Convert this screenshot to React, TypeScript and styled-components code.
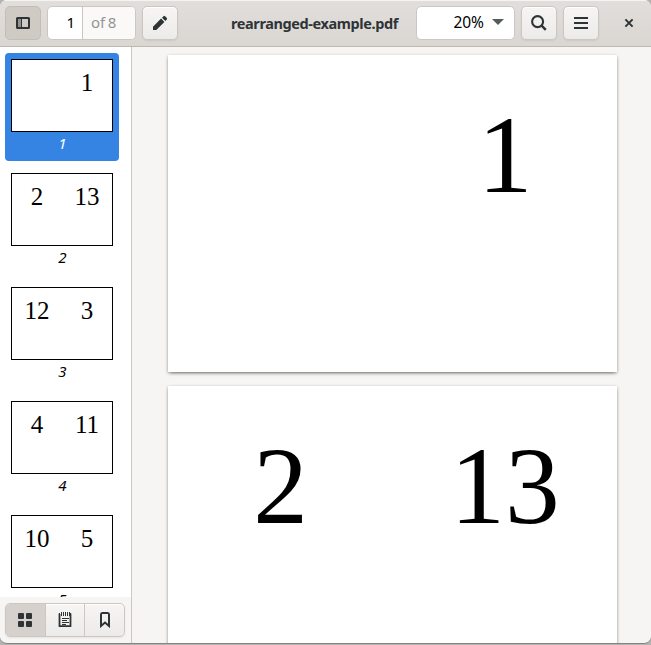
import React from 'react';
import styled, { createGlobalStyle, css } from 'styled-components';

const Global = createGlobalStyle`
  * { box-sizing: border-box; }
  body { margin: 0; overflow: hidden; background: #b4b3b1; }
`;

const Window = styled.div`
  width: 651px;
  height: 644px;
  display: flex;
  flex-direction: column;
  overflow: hidden;
  background: #f6f5f4;
  border-bottom: 1px solid #858483;
  border-radius: 7px;
  font: 15px 'Noto Sans', sans-serif;
  color: #2e3436;
`;

const HeaderBar = styled.header`
  flex: none;
  height: 47px;
  display: flex;
  align-items: center;
  padding: 0 5px;
  background: linear-gradient(#e1dedb, #dad6d2);
  border-bottom: 1px solid #bfb8b1;
  box-shadow: inset 0 1px #f5f4f3;
`;

const raised = css`
  border: 1px solid #cdc7c2;
  background: linear-gradient(#f6f5f4, #edebe9);
  box-shadow: inset 0 1px #fff, 0 1px 2px rgba(0, 0, 0, 0.07);
`;

const IconButton = styled.button<{ $active?: boolean; $gap?: number }>`
  width: 36px;
  height: 34px;
  flex: none;
  padding: 0;
  margin-left: ${(p) => p.$gap ?? 0}px;
  display: flex;
  align-items: center;
  justify-content: center;
  border-radius: 5px;
  color: #2e3436;
  ${raised}
  ${(p) => p.$active && css`
    background: #d0cac4;
    border-color: #c4bdb6;
    box-shadow: none;
  `}
`;

const PageEntry = styled.div`
  width: 89px;
  height: 34px;
  margin-left: 6px;
  display: flex;
  border: 1px solid #cdc7c2;
  border-radius: 5px;
  overflow: hidden;
  background: #fff;
  line-height: 31px;
`;

const CurrentPage = styled.span`
  width: 35px;
  padding-right: 7px;
  text-align: right;
  color: #000;
  border-right: 1px solid #cdc7c2;
`;

const PageCount = styled.span`
  flex: 1;
  padding-left: 8px;
  background: #faf9f8;
  color: #929595;
  word-spacing: -1.5px;
`;

const Title = styled.h1`
  margin: 0 0 0 53px;
  width: 185px;
  font-size: 14.5px;
  font-weight: 700;
  line-height: 32px;
  letter-spacing: -0.4px;
  white-space: nowrap;
`;

const ZoomBox = styled.div`
  width: 99px;
  height: 34px;
  display: flex;
  align-items: center;
  justify-content: flex-end;
  gap: 8px;
  padding: 0 10px 2px 0;
  border: 1px solid #cdc7c2;
  border-radius: 5px;
  background: #fff;
  color: #000;
  font-size: 15.5px;
`;

const CloseButton = styled.button`
  width: 16px;
  height: 16px;
  margin-left: 22px;
  padding: 0;
  border: 0;
  background: none;
  display: flex;
`;

const Body = styled.div`
  flex: 1;
  min-height: 0;
  display: flex;
`;

const Sidebar = styled.aside`
  width: 132px;
  flex: none;
  display: flex;
  flex-direction: column;
  border-right: 1px solid #cdc7c2;
`;

const ThumbList = styled.div`
  height: 550px;
  flex: none;
  padding: 6px 5px 0;
  overflow: hidden;
  background: #fff;
  display: flex;
  flex-direction: column;
  gap: 6px;
`;

const Thumb = styled.div<{ $selected?: boolean }>`
  width: 114px;
  height: 108px;
  flex: none;
  padding: 6px;
  border-radius: 4px;
  color: ${(p) => (p.$selected ? '#fff' : '#000')};
  background: ${(p) => (p.$selected ? '#3584e4' : 'transparent')};
`;

const Sheet = styled.div`
  width: 102px;
  height: 73px;
  display: grid;
  grid-template-columns: 50px 50px;
  border: 1px solid #000;
  background: #fff;
  color: #000;
  font: 25px/45px 'Liberation Serif', serif;
  text-align: center;
`;

const Caption = styled.div`
  padding-left: 1px;
  font-style: italic;
  font-size: 15px;
  line-height: 22px;
  text-align: center;
`;

const SideSwitcher = styled.div`
  height: 34px;
  width: 120px;
  margin: 6px 5px;
  display: flex;
  border-radius: 5px;
  overflow: hidden;
  ${raised}
`;

const SwitchTab = styled.button<{ $active?: boolean }>`
  flex: 1;
  padding: 0;
  border: 0;
  display: flex;
  align-items: center;
  justify-content: center;
  background: ${(p) => (p.$active ? '#d6d1cd' : 'none')};
  & + & { border-left: 1px solid #cdc7c2; }
`;

const Viewer = styled.main`
  flex: 1;
  padding: 8px 0 0 36px;
  display: flex;
  flex-direction: column;
  gap: 14px;
  overflow: hidden;
`;

const Page = styled.section`
  width: 449px;
  height: 317px;
  flex: none;
  display: grid;
  grid-template-columns: 225px 224px;
  background: #fff;
  color: #000;
  box-shadow: 0 1px 3px rgba(0, 0, 0, 0.3), 0 2px 4px -2px rgba(0, 0, 0, 0.55);
  font: 109.5px/200px 'Liberation Serif', serif;
  text-align: center;
`;

const Numeral = styled.span``;

const SidebarIcon = () => (
  <svg width="16" height="16" viewBox="0 0 16 16">
    <rect x="2" y="3" width="12" height="10" rx="0.5" fill="none" stroke="#2e3436" strokeWidth="2" />
    <path d="M3 4h3v8H3z" fill="#929292" />
    <path d="M6 4h1v8H6z" fill="#2e3436" />
  </svg>
);
const PencilIcon = () => (
  <svg width="16" height="16" viewBox="0 0 16 16" fill="#2e3436">
    <path d="M1 15v-3.3L9.1 3.6l3.3 3.3L4.3 15zM10 2.7l1.5-1.5q.8-.7 1.6 0l1.7 1.7q.7.8 0 1.6L13.3 6z" />
  </svg>
);
const SearchIcon = () => (
  <svg width="16" height="16" viewBox="0 0 16 16" fill="none" stroke="#2e3436" strokeWidth="2.1">
    <circle cx="6.6" cy="6.6" r="5.5" />
    <path d="m10.6 10.6 4.2 4.2" strokeWidth="2.4" />
  </svg>
);
const MenuIcon = () => (
  <svg width="16" height="16" viewBox="0 0 16 16" fill="#2e3436">
    <path d="M1 2h14v2H1zM1 7h14v2H1zM1 12h14v2H1z" />
  </svg>
);
const CloseIcon = () => (
  <svg width="16" height="16" viewBox="0 0 16 16" fill="none" stroke="#2e3436" strokeWidth="2">
    <path d="m4.4 4.4 7.2 7.2M11.6 4.4l-7.2 7.2" />
  </svg>
);
const ArrowIcon = () => (
  <svg width="12" height="6" viewBox="0 0 12 6">
    <path d="M0 0h12L6 6z" fill="#555c5c" />
  </svg>
);
const GridIcon = () => (
  <svg width="16" height="16" viewBox="0 0 16 16" fill="#2e3436">
    <rect x="1" y="1" width="6" height="6" rx="1" />
    <rect x="9" y="1" width="6" height="6" rx="1" />
    <rect x="1" y="9" width="6" height="6" rx="1" />
    <rect x="9" y="9" width="6" height="6" rx="1" />
  </svg>
);
const NotesIcon = () => (
  <svg width="16" height="16" viewBox="0 0 16 16">
    <path d="M3 2H2.5v12.2h11V2H13" fill="none" stroke="#2e3436" strokeWidth="1.8" strokeLinejoin="round" />
    <path d="M4.5 0v4M6.5 0v4M8.5 0v4M10.5 0v4M12.5 0v4M5 6.5h7M5 8.5h5M5 10.5h7M5 12.5h4" stroke="#2e3436" />
  </svg>
);
const BookmarkIcon = () => (
  <svg width="16" height="16" viewBox="0 0 16 16">
    <path d="M4 14V2.5Q4 1 5.2 1h5.6Q12 1 12 2.5V14l-4-3.4z" fill="none" stroke="#2e3436" strokeWidth="2" />
  </svg>
);

const sheets = [['', '1'], ['2', '13'], ['12', '3'], ['4', '11'], ['10', '5']];

export default function App() {
  return (
    <>
      <Global />
      <Window>
        <HeaderBar>
          <IconButton $active aria-label="Side pane"><SidebarIcon /></IconButton>
          <PageEntry>
            <CurrentPage>1</CurrentPage>
            <PageCount>of 8</PageCount>
          </PageEntry>
          <IconButton $gap={6} aria-label="Annotate"><PencilIcon /></IconButton>
          <Title>rearranged-example.pdf</Title>
          <ZoomBox><span>20%</span><ArrowIcon /></ZoomBox>
          <IconButton $gap={6} aria-label="Search"><SearchIcon /></IconButton>
          <IconButton $gap={6} aria-label="Menu"><MenuIcon /></IconButton>
          <CloseButton aria-label="Close"><CloseIcon /></CloseButton>
        </HeaderBar>
        <Body>
          <Sidebar>
            <ThumbList>
              {sheets.map(([left, right], i) => (
                <Thumb key={i} $selected={i === 0}>
                  <Sheet><Numeral>{left}</Numeral><Numeral>{right}</Numeral></Sheet>
                  <Caption>{i + 1}</Caption>
                </Thumb>
              ))}
            </ThumbList>
            <SideSwitcher>
              <SwitchTab $active aria-label="Thumbnails"><GridIcon /></SwitchTab>
              <SwitchTab aria-label="Annotations"><NotesIcon /></SwitchTab>
              <SwitchTab aria-label="Bookmarks"><BookmarkIcon /></SwitchTab>
            </SideSwitcher>
          </Sidebar>
          <Viewer>
            {sheets.slice(0, 2).map(([left, right], i) => (
              <Page key={i}><Numeral>{left}</Numeral><Numeral>{right}</Numeral></Page>
            ))}
          </Viewer>
        </Body>
      </Window>
    </>
  );
}
